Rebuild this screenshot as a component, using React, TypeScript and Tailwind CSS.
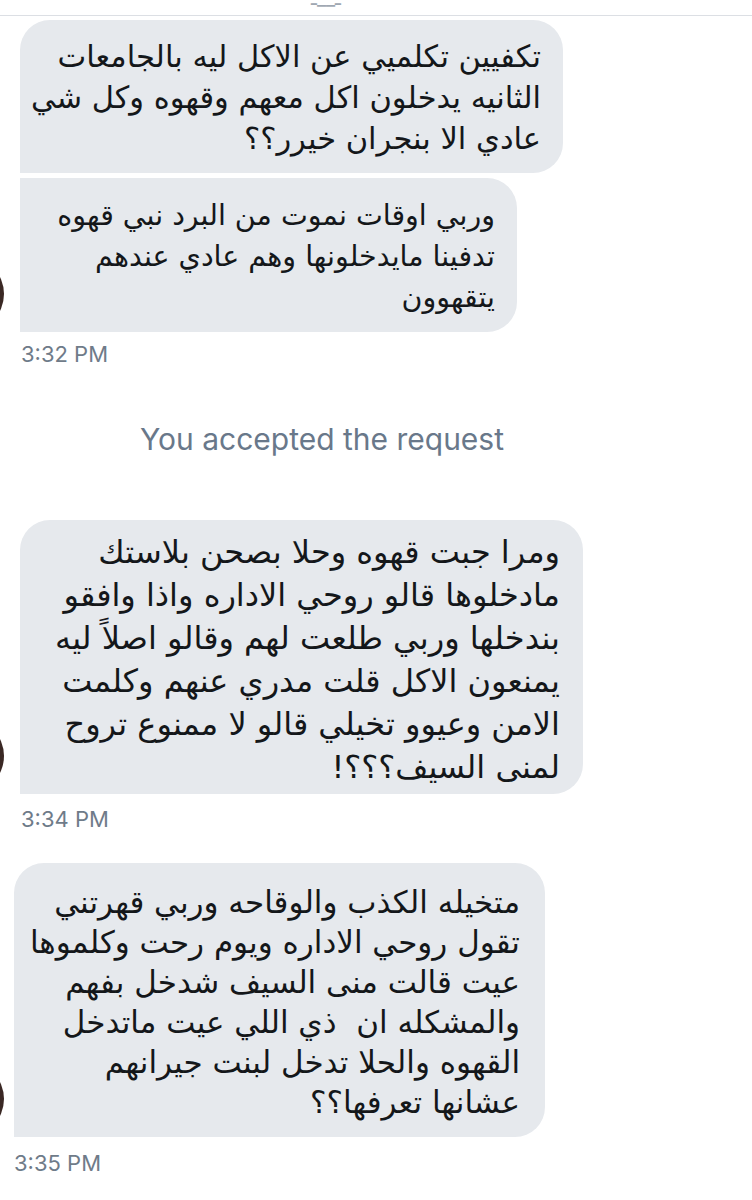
const arabic = { fontFamily: '"DejaVu Sans", sans-serif' };
const latin = { fontFamily: 'Inter, "Liberation Sans", sans-serif' };

const bubbles = [
  {
    lines: [
      'تكفيين تكلميي عن الاكل ليه بالجامعات',
      'الثانيه يدخلون اكل معهم وقهوه وكل شي',
      'عادي الا بنجران خيرر؟؟',
    ],
  },
  {
    lines: [
      'وربي اوقات نموت من البرد نبي قهوه',
      'تدفينا مايدخلونها وهم عادي عندهم',
      'يتقهوون',
    ],
  },
  {
    lines: [
      'ومرا جبت قهوه وحلا بصحن بلاستك',
      'مادخلوها قالو روحي الاداره واذا وافقو',
      'بندخلها وربي طلعت لهم وقالو اصلاً ليه',
      'يمنعون الاكل قلت مدري عنهم وكلمت',
      'الامن وعيوو تخيلي قالو لا ممنوع تروح',
      'لمنى السيف؟؟؟!',
    ],
  },
  {
    lines: [
      'متخيله الكذب والوقاحه وربي قهرتني',
      'تقول روحي الاداره ويوم رحت وكلموها',
      'عيت قالت منى السيف شدخل بفهم',
      'والمشكله ان  ذي اللي عيت ماتدخل',
      'القهوه والحلا تدخل لبنت جيرانهم',
      'عشانها تعرفها؟؟',
    ],
  },
];

const Lines = ({ lines }: { lines: string[] }) => (
  <div dir="rtl" className="text-right text-[#14171a]" style={arabic}>
    {lines.map((l) => (
      <div key={l} className="whitespace-pre">{l}</div>
    ))}
  </div>
);

// avatar sits mostly outside the left edge of the crop
const Avatar = () => (
  <div className="absolute left-[-72px] bottom-0 w-[76px] h-[76px] rounded-full bg-[#3a2824]" />
);

const Time = ({ t, cls }: { t: string; cls: string }) => (
  <div className={`text-[22px] leading-[24px] text-[#6f7b89] ${cls}`} style={latin}>{t}</div>
);

export default function App() {
  return (
    <div className="w-[752px] h-[1200px] bg-white overflow-hidden">
      <div className="h-[16px] border-b border-[#dcdfe4] overflow-hidden flex justify-center">
        <div className="mt-[-14px] ml-[-100px] text-[20px] leading-[24px] text-[#a0a8b2]" style={latin}>ـ__ـ</div>
      </div>

      <div className="relative">
        <div className="ml-[20px] mt-[4px] w-[543px] h-[153px] bg-[#e6e9ed] rounded-[30px] rounded-bl-none pt-[16px] pr-[22px] text-[30.5px] leading-[41px]">
          <Lines lines={bubbles[0].lines} />
        </div>
        <div className="ml-[20px] mt-[5px] w-[497px] h-[154px] bg-[#e6e9ed] rounded-r-[30px] pt-[17px] pr-[22px] text-[28.5px] leading-[41px]">
          <Lines lines={bubbles[1].lines} />
        </div>
        <Avatar />
      </div>
      <Time t="3:32 PM" cls="ml-[21px] mt-[10px]" />

      <div className="mt-[55px] ml-[-108px] text-center text-[30px] leading-[36px] text-[#69788a]" style={latin}>
        You accepted the request
      </div>

      <div className="relative mt-[63px]">
        <div className="ml-[20px] w-[563px] h-[274px] bg-[#e6e9ed] rounded-[30px] rounded-bl-none pt-[11px] pr-[23px] text-[32px] leading-[43px]">
          <Lines lines={bubbles[2].lines} />
        </div>
        <Avatar />
      </div>
      <Time t="3:34 PM" cls="ml-[21px] mt-[13px]" />

      <div className="relative mt-[32px]">
        <div className="ml-[14px] w-[531px] h-[274px] bg-[#e6e9ed] rounded-[30px] rounded-bl-none pt-[19px] pr-[25px] text-[31px] leading-[40px]">
          <Lines lines={bubbles[3].lines} />
        </div>
        <Avatar />
      </div>
      <Time t="3:35 PM" cls="ml-[14px] mt-[14px]" />
    </div>
  );
}
